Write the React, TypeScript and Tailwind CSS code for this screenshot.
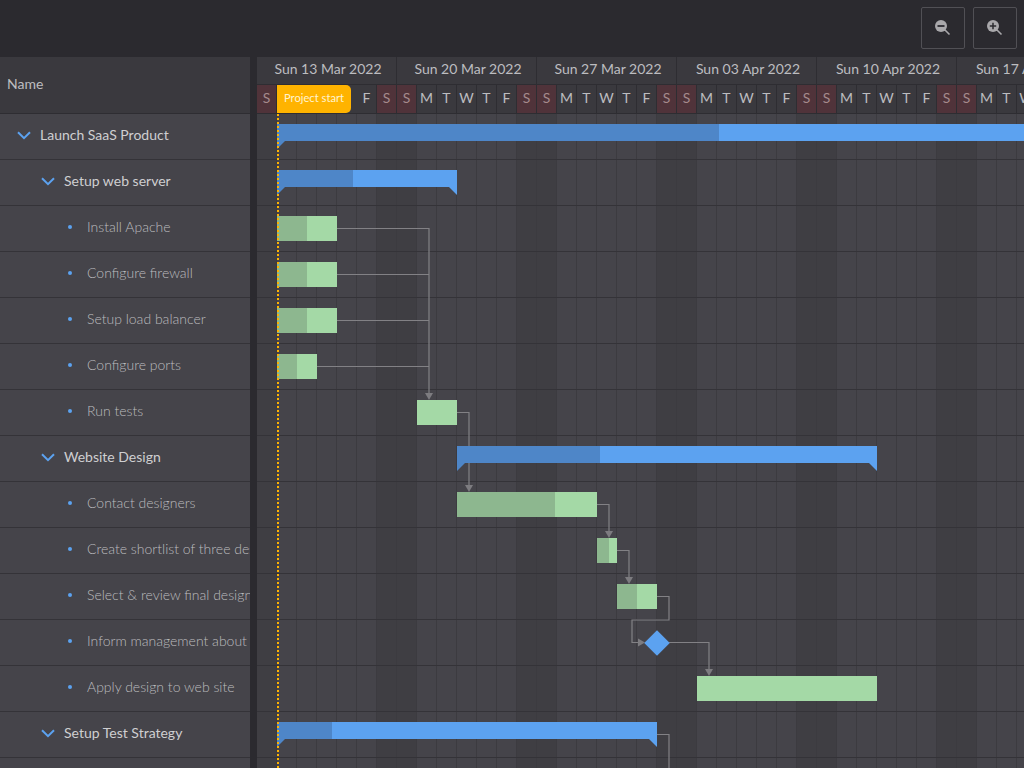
const weeks = ["Sun 13 Mar 2022", "Sun 20 Mar 2022", "Sun 27 Mar 2022", "Sun 03 Apr 2022", "Sun 10 Apr 2022", "Sun 17 Apr 2022"];
const dayLetters = ["S", "M", "T", "W", "T", "F", "S"];
const days = Array.from({ length: 39 }, (_, i) => ({ key: i, label: dayLetters[i % 7], off: i % 7 === 0 || i % 7 === 6 }));

type Row = {
  name: string;
  level: 0 | 1 | 2;
  kind?: "summary" | "task" | "milestone";
  x?: number;
  end?: number;
  progress?: number;
};

const rows: Row[] = [
  { name: "Launch SaaS Product", level: 0, kind: "summary", x: 277, end: 1100, progress: 719 },
  { name: "Setup web server", level: 1, kind: "summary", x: 277, end: 457, progress: 353 },
  { name: "Install Apache", level: 2, kind: "task", x: 277, end: 337, progress: 307 },
  { name: "Configure firewall", level: 2, kind: "task", x: 277, end: 337, progress: 307 },
  { name: "Setup load balancer", level: 2, kind: "task", x: 277, end: 337, progress: 307 },
  { name: "Configure ports", level: 2, kind: "task", x: 277, end: 317, progress: 297 },
  { name: "Run tests", level: 2, kind: "task", x: 417, end: 457, progress: 417 },
  { name: "Website Design", level: 1, kind: "summary", x: 457, end: 877, progress: 600 },
  { name: "Contact designers", level: 2, kind: "task", x: 457, end: 597, progress: 555 },
  { name: "Create shortlist of three designs", level: 2, kind: "task", x: 597, end: 617, progress: 609 },
  { name: "Select & review final design", level: 2, kind: "task", x: 617, end: 657, progress: 637 },
  { name: "Inform management about decision", level: 2, kind: "milestone", x: 657 },
  { name: "Apply design to web site", level: 2, kind: "task", x: 697, end: 877, progress: 697 },
  { name: "Setup Test Strategy", level: 1, kind: "summary", x: 277, end: 657, progress: 332 },
  { name: "", level: 2 },
];

const links = [
  "M337 228.5H429V394",
  "M337 274.5H429",
  "M337 320.5H429",
  "M317 366.5H429",
  "M457 412.5H469V486",
  "M597 504.5H609V532",
  "M617 550.5H629V578",
  "M657 596.5H669V620H632V642.5H640",
  "M669 642.5H709V670",
  "M657 734.5H669V768",
];
const arrows = [
  "425,393 433,393 429,400",
  "465,485 473,485 469,492",
  "605,531 613,531 609,538",
  "625,577 633,577 629,584",
  "705,669 713,669 709,676",
  "638,638.5 638,646.5 645,642.5",
];

function Chevron() {
  return (
    <svg width="14" height="9" viewBox="0 0 14 9" className="mt-[3px] shrink-0" fill="none">
      <path d="M1 1.2L7 7.2L13 1.2" stroke="#5ca2f0" strokeWidth="2" />
    </svg>
  );
}

function Lens({ plus }: { plus?: boolean }) {
  return (
    <svg width="18" height="18" viewBox="0 0 18 18" fill="none">
      <path d="M10 10L15.5 15.5" stroke="#a9a8ab" strokeWidth="1.6" />
      <circle cx="7" cy="7" r="6" fill="#a9a8ab" />
      {plus ? (
        <path d="M3.8 7H10.2M7 3.8V10.2" stroke="#2b2a2f" strokeWidth="1.5" />
      ) : (
        <path d="M3.5 7H10.5" stroke="#2b2a2f" strokeWidth="1.8" />
      )}
    </svg>
  );
}

function NameCell({ row }: { row: Row }) {
  const pad = row.level === 0 ? "pl-[17px]" : row.level === 1 ? "pl-[41px]" : "pl-[68px]";
  return (
    <div className={`flex h-[46px] items-center overflow-hidden whitespace-nowrap border-b border-[#343338] bg-[#45444a] pb-[5px] ${pad}`}>
      {row.name && row.level < 2 && (
        <>
          <Chevron />
          <span className="ml-[9px] text-[14px] text-[#cfcfd1]">{row.name}</span>
        </>
      )}
      {row.name && row.level === 2 && (
        <>
          <span className="mt-[2px] h-1 w-1 shrink-0 rounded-full bg-[#5ca2f0]" />
          <span className="ml-[15px] text-[14px] font-light text-[#bcbcbf]">{row.name}</span>
        </>
      )}
    </div>
  );
}

function Bar({ row }: { row: Row }) {
  if (row.kind === "milestone") {
    return (
      <div
        className="absolute top-[14px] z-20 h-[18px] w-[18px] rotate-45 bg-[#5ca2f0]"
        style={{ left: (row.x ?? 0) - 257 - 9 }}
      />
    );
  }
  if (row.kind === "task") {
    return (
      <div
        className="absolute top-[10px] z-20 h-[25px] bg-[#a4d9a6]"
        style={{ left: (row.x ?? 0) - 257, width: (row.end ?? 0) - (row.x ?? 0) }}
      >
        <div className="h-full bg-[#8db78f]" style={{ width: (row.progress ?? 0) - (row.x ?? 0) }} />
      </div>
    );
  }
  if (row.kind === "summary") {
    return (
      <div
        className="absolute top-[10px] z-20 h-[17px] bg-[#5ca2f0]"
        style={{ left: (row.x ?? 0) - 257, width: (row.end ?? 0) - (row.x ?? 0) }}
      >
        <div className="h-full bg-[#4e86c8]" style={{ width: (row.progress ?? 0) - (row.x ?? 0) }} />
        <div className="absolute left-0 top-full h-0 w-0 border-r-[8px] border-t-[8px] border-r-transparent border-t-[#4e86c8]" />
        <div className="absolute right-0 top-full h-0 w-0 border-l-[8px] border-t-[8px] border-l-transparent border-t-[#5ca2f0]" />
      </div>
    );
  }
  return null;
}

export default function App() {
  return (
    <div className="flex h-screen w-full flex-col overflow-hidden bg-[#2b2a2f] font-['Lato','Noto_Sans',sans-serif]">
      <div className="flex h-[57px] shrink-0 items-start justify-end gap-2 pr-[7px] pt-[7px]">
        <button className="flex h-[42px] w-11 items-center justify-center rounded-[2px] border border-[#515055]">
          <Lens />
        </button>
        <button className="flex h-[42px] w-11 items-center justify-center rounded-[2px] border border-[#515055]">
          <Lens plus />
        </button>
      </div>

      <div className="flex min-h-0 flex-1">
        <div className="w-[250px] shrink-0 overflow-hidden">
          <div className="flex h-[57px] items-center border-b border-[#2e2d32] bg-[#3a393e] pb-[3px] pl-[7px] text-[14px] text-[#bdbdc0]">
            Name
          </div>
          {rows.map((r, i) => (
            <NameCell key={i} row={r} />
          ))}
        </div>

        <div className="w-[7px] shrink-0 bg-[#2b2a2f]" />

        <div className="min-w-0 flex-1 overflow-hidden">
          <div className="w-[780px]">
            <div className="flex h-[28px] border-b border-[#2e2d32] bg-[#3a393e]">
              {weeks.map((w) => (
                <div key={w} className="w-[140px] shrink-0 whitespace-nowrap border-r border-[#2e2d32] pl-[3px] text-center text-[14px] leading-[24px] text-[#bdbdc0]">
                  {w}
                </div>
              ))}
            </div>
            <div className="relative flex h-[29px] border-b border-[#2e2d32] bg-[#3a393e]">
              {days.map((d, i) =>
                i >= 1 && i <= 4 ? (
                  <div key={d.key} className="h-full w-5 shrink-0" />
                ) : (
                  <div
                    key={d.key}
                    className={`h-full w-5 shrink-0 border-r border-[#2e2d32] text-center text-[14px] leading-[25px] ${d.off ? "bg-[#50333a] text-[#a58a8c]" : "text-[#bdbdc0]"}`}
                  >
                    {d.label}
                  </div>
                ),
              )}
              <div className="absolute left-5 top-0 flex h-[28px] w-[74px] items-center justify-center rounded-r-[5px] bg-[#ffb300] pb-px text-[11.2px] text-[#fff3d0]">
                Project start
              </div>
            </div>
          </div>

          <div className="relative h-[654px] overflow-hidden bg-[#45444a]">
            <div className="absolute inset-0 flex">
              {days.map((d) => (
                <div key={d.key} className={`h-full w-5 shrink-0 border-r border-[#3c3b40] ${d.off ? "bg-[#3f3e43]" : ""}`} />
              ))}
            </div>

            {rows.map((r, i) => (
              <div key={i} className="relative h-[46px] border-b border-[#343338]">
                <Bar row={r} />
              </div>
            ))}

            <svg className="absolute left-0 top-0 z-10" width="767" height="654" viewBox="257 114 767 654" fill="none">
              {links.map((d) => (
                <path key={d} d={d} stroke="#828185" strokeWidth="1.2" />
              ))}
              {arrows.map((p) => (
                <polygon key={p} points={p} fill="#7d7c80" />
              ))}
            </svg>

            <div className="absolute bottom-0 left-5 top-0 z-30 border-l-2 border-dotted border-[#ffb300]" />
          </div>
        </div>
      </div>
    </div>
  );
}
